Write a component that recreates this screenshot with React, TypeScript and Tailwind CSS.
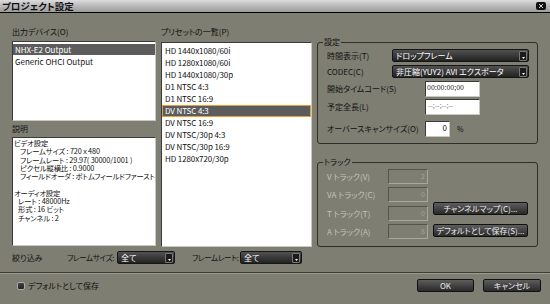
import React from 'react';

const font = "font-['Noto_Sans_CJK_JP','Noto_Sans',sans-serif] [font-feature-settings:'palt'] whitespace-nowrap";

function Dropdown({ value, className = '' }: { value: string; className?: string }) {
  return (
    <div
      className={`flex items-center h-[13px] rounded-[2px] border border-[#151515] bg-gradient-to-b from-[#525252] to-[#222] text-white text-[8px] pl-[3px] pr-[1px] ${className}`}
    >
      <span className="flex-1 overflow-hidden leading-[11px]">{value}</span>
      <span className="flex items-end justify-center w-[8px] h-[10px] rounded-[1px] border border-[#777] bg-[#1c1c1c] pb-[1px]">
        <svg width="3" height="2" viewBox="0 0 3 2">
          <path d="M0 0h3L1.5 2z" fill="#fff" />
        </svg>
      </span>
    </div>
  );
}

function DarkButton({ label, className = '' }: { label: string; className?: string }) {
  return (
    <div
      className={`flex items-center justify-center h-[13px] rounded-[2px] border border-[#111] bg-gradient-to-b from-[#5e5e5e] to-[#2a2a2a] text-[#ececec] text-[8px] leading-[11px] ${className}`}
    >
      {label}
    </div>
  );
}

function GroupBox({ title, className = '', children }: { title: string; className?: string; children: React.ReactNode }) {
  return (
    <div className={`relative rounded-[3px] border border-[#2e2e2a] ${className}`}>
      <span className="absolute -top-[7px] left-[5px] px-[1px] bg-[#7e7e72] text-[8px] leading-[12px] text-[#111]">
        {title}
      </span>
      {children}
    </div>
  );
}

const inset = 'border border-t-[#3a3a3a] border-l-[#3a3a3a] border-b-[#c8c8c0] border-r-[#c8c8c0]';

const presets = [
  'HD 1440x1080/60i',
  'HD 1280x1080/60i',
  'HD 1440x1080/30p',
  'D1 NTSC 4:3',
  'D1 NTSC 16:9',
  'DV NTSC 4:3',
  'DV NTSC 16:9',
  'DV NTSC/30p 4:3',
  'DV NTSC/30p 16:9',
  'HD 1280x720/30p',
];

const tracks = [
  { label: 'V トラック(V)', value: '2' },
  { label: 'VA トラック(C)', value: '0' },
  { label: 'T トラック(T)', value: '0' },
  { label: 'A トラック(A)', value: '8' },
];

export default function App() {
  return (
    <div className={`w-[550px] h-[304px] bg-[#7e7e72] flex flex-col overflow-hidden text-[#111] ${font}`}>
      {/* title bar */}
      <div className="flex items-center h-[13px] bg-gradient-to-b from-[#dcdcdc] via-[#b8b8b8] to-[#9c9c9c] border-b border-black pl-[2px] pr-[4px]">
        <span className="flex-1 text-[9.5px] font-bold leading-[12px] text-[#111]">プロジェクト設定</span>
        <span className="flex items-center justify-center w-[10px] h-[8px] rounded-[2px] bg-[#111]">
          <svg width="4" height="4" viewBox="0 0 4 4">
            <path d="M0 0L4 4M4 0L0 4" stroke="#ddd" strokeWidth="1" />
          </svg>
        </span>
      </div>

      {/* main */}
      <div className="flex pl-[12px] pt-[13px]">
        {/* left column */}
        <div className="w-[144px] flex flex-col">
          <div className="h-[12px] text-[8px] leading-[12px]">出力デバイス(O)</div>
          <div className={`mt-[3px] h-[80px] bg-white ${inset} pt-[2px] text-[8px] leading-[11px]`}>
            <div className="h-[11px] bg-[#5c5c5c] text-white pl-[2px]">NHX-E2 Output</div>
            <div className="h-[12px] leading-[12px] pl-[2px] mt-[1px]">Generic OHCI Output</div>
          </div>
          <div className="mt-[2px] h-[12px] text-[8px] leading-[12px]">説明</div>
          <div className={`mt-[2px] h-[109px] bg-white ${inset} pl-[1px] pt-[1px] text-[7.3px] leading-[8.3px] tracking-[-0.15px]`}>
            <div>ビデオ設定</div>
            <div className="pl-[6px]">フレームサイズ : 720 x 480</div>
            <div className="pl-[6px]">フレームレート : 29.97( 30000/1001 )</div>
            <div className="pl-[6px]">ピクセル縦横比 : 0.9000</div>
            <div className="pl-[6px]">フィールドオーダ : ボトムフィールドファースト</div>
            <div className="h-[8.3px]" />
            <div>オーディオ設定</div>
            <div className="pl-[4px]">レート : 48000Hz</div>
            <div className="pl-[4px]">形式 : 16 ビット</div>
            <div className="pl-[4px]">チャンネル : 2</div>
          </div>
        </div>

        {/* middle column */}
        <div className="ml-[5px] w-[151px] flex flex-col">
          <div className="h-[12px] text-[8px] leading-[12px]">プリセットの一覧(P)</div>
          <div className={`mt-[4px] h-[205px] bg-white ${inset} pt-[2px] text-[8px] tracking-[-0.1px]`}>
            {presets.map((p, i) =>
              i === 5 ? (
                <div key={p} className="flex items-center h-[12px] bg-[#5c5c5c] border border-[#e8a030] text-white pl-[2px]">
                  {p}
                </div>
              ) : (
                <div key={p} className="flex items-center h-[12px] pl-[3px]">
                  {p}
                </div>
              )
            )}
          </div>
        </div>

        {/* right column */}
        <div className="ml-[5px] w-[221px] flex flex-col pt-[16px]">
          <GroupBox title="設定" className="h-[102px] pl-[9px] pr-[8px] pt-[6px]">
            <div className="flex items-center h-[13px] text-[8px]">
              <span className="w-[65px]">時間表示(T)</span>
              <Dropdown value="ドロップフレーム" className="w-[137px]" />
            </div>
            <div className="flex items-center h-[13px] mt-[3px] text-[8px]">
              <span className="w-[65px]">CODEC(C)</span>
              <Dropdown value="非圧縮(YUY2) AVI エクスポータ" className="w-[137px]" />
            </div>
            <div className="flex items-center h-[16px] mt-[3px] text-[8px]">
              <span className="w-[98px]">開始タイムコード(S)</span>
              <div className={`w-[55px] h-[16px] bg-white ${inset} text-[7px] leading-[10px] pl-[1px]`}>00:00:00;00</div>
            </div>
            <div className="flex items-center h-[16px] mt-[2px] text-[8px]">
              <span className="w-[98px]">予定全長(L)</span>
              <div className={`w-[55px] h-[16px] bg-white ${inset} text-[7px] leading-[10px] pl-[2px] text-[#777]`}>--;--;--;--</div>
            </div>
            <div className="flex items-center h-[16px] mt-[6px] text-[8px]">
              <span className="w-[98px]">オーバースキャンサイズ(O)</span>
              <div className={`w-[25px] h-[16px] bg-white ${inset} text-[8px] leading-[12px] text-right pr-[2px]`}>0</div>
              <span className="ml-[7px] text-[7px]">%</span>
            </div>
          </GroupBox>

          <GroupBox title="トラック" className="mt-[18px] h-[85px] pl-[9px] pt-[6px] flex">
            <div className="flex flex-col">
              {tracks.map((t, i) => (
                <div key={t.label} className={`flex items-center h-[15px] text-[8px] ${i === 0 ? '' : i === 2 ? 'mt-[4px]' : 'mt-[3px]'}`}>
                  <span className="w-[61px] text-[#c4c4bc]">{t.label}</span>
                  <div className="w-[40px] h-[15px] border border-t-[#55554c] border-l-[#55554c] border-b-[#a8a89c] border-r-[#a8a89c] text-right pr-[2px] text-[7px] leading-[13px] text-[#a4a49a]">
                    {t.value}
                  </div>
                </div>
              ))}
            </div>
            <div className="ml-[5px] flex flex-col pt-[33px]">
              <DarkButton label="チャンネルマップ(C)..." className="w-[95px]" />
              <DarkButton label="デフォルトとして保存(S)..." className="w-[95px] mt-[9px]" />
            </div>
          </GroupBox>
        </div>
      </div>

      {/* filter row */}
      <div className="flex items-center h-[13px] mt-[4px] pl-[12px] text-[8px]">
        <span className="w-[55px]">絞り込み</span>
        <span className="w-[50px] text-[7.5px] tracking-[-0.3px]">フレームサイズ:</span>
        <Dropdown value="全て" className="w-[58px]" />
        <span className="ml-[17px] w-[48px] text-[7.5px] tracking-[-0.3px]">フレームレート:</span>
        <Dropdown value="全て" className="w-[62px]" />
      </div>

      {/* separator */}
      <div className="mt-[8px] h-[1px] bg-[#3c3c36]" />
      <div className="h-[1px] bg-[#9c9c90]" />

      {/* bottom row */}
      <div className="flex items-center h-[13px] mt-[5px] pl-[17px] pr-[9px] text-[8px]">
        <span className="w-[8px] h-[8px] rounded-[2px] border border-[#aaa] bg-gradient-to-b from-[#444] to-[#222]" />
        <span className="ml-[3px] flex-1">デフォルトとして保存</span>
        <DarkButton label="OK" className="w-[57px]" />
        <DarkButton label="キャンセル" className="w-[58px] ml-[9px]" />
      </div>
    </div>
  );
}
